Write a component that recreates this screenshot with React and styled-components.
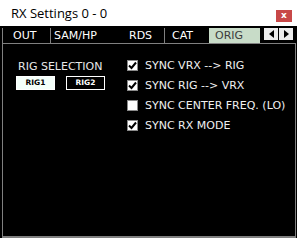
import React, { useState } from "react";
import styled, { createGlobalStyle } from "styled-components";

const Global = createGlobalStyle`
  html, body { margin: 0; padding: 0; background: #000; }
  body { width: 297px; height: 238px; overflow: hidden; }
`;

const Window = styled.div`
  width: 297px;
  height: 238px;
  display: flex;
  flex-direction: column;
  background: #000;
`;

const TitleBar = styled.div`
  height: 26px;
  background: #fff;
  display: flex;
  align-items: center;
  padding-left: 11px;
  padding-right: 5px;
  box-sizing: border-box;
`;

const Title = styled.span`
  font-family: "Open Sans", "Noto Sans", sans-serif;
  font-size: 13px;
  color: #000;
  line-height: 1;
`;

const CloseBtn = styled.div`
  margin-left: auto;
  width: 16px;
  height: 12px;
  margin-top: 6px;
  background: #c84848;
  color: #fff;
  font-family: "DejaVu Sans", sans-serif;
  font-size: 9px;
  font-weight: bold;
  line-height: 11px;
  text-align: center;
`;

const Body = styled.div`
  flex: 1;
  display: flex;
  flex-direction: column;
  padding: 0 1px 0 2px;
`;

const TabRow = styled.div`
  height: 17px;
  display: flex;
  align-items: flex-end;
`;

const Tab = styled.div`
  box-sizing: border-box;
  height: 15px;
  width: ${(p) => p.$w}px;
  padding-left: ${(p) => p.$pl}px;
  border-left: 1px solid ${(p) => (p.$sep ? "#808080" : "transparent")};
  background: ${(p) => (p.$active ? "#c8dcc8" : "#000")};
  color: ${(p) => (p.$active ? "#3c3c3c" : "#fff")};
  font-family: "DejaVu Sans", sans-serif;
  font-size: 11px;
  line-height: 15px;
  white-space: nowrap;
`;

const Arrows = styled.div`
  display: flex;
  gap: 1px;
  margin-left: 4px;
  align-self: flex-start;
  margin-top: 2px;
`;

const ArrowBtn = styled.div`
  width: 14px;
  height: 12px;
  background: #ececec;
  display: flex;
  align-items: center;
  justify-content: center;
`;

const Panel = styled.div`
  flex: 1;
  border: 1px solid #808080;
  border-bottom-width: 2px;
  display: flex;
  padding: 16px 0 0 13px;
`;

const LeftCol = styled.div`
  width: 111px;
  display: flex;
  flex-direction: column;
`;

const Label = styled.div`
  font-family: "DejaVu Sans", sans-serif;
  font-size: 11px;
  line-height: 13px;
  color: #e8e8e8;
  padding-left: 2px;
  white-space: nowrap;
`;

const RigRow = styled.div`
  display: flex;
  gap: 11px;
  margin-top: 3px;
`;

const RigBtn = styled.div`
  box-sizing: border-box;
  width: 39px;
  height: 14px;
  border: 1px solid #fff;
  background: ${(p) => (p.$on ? "#f4fffa" : "#000")};
  color: ${(p) => (p.$on ? "#000" : "#fff")};
  font-family: "DejaVu Sans", sans-serif;
  font-weight: bold;
  font-size: 7.5px;
  line-height: 12px;
  text-align: center;
`;

const RightCol = styled.div`
  display: flex;
  flex-direction: column;
  gap: 9px;
`;

const CheckRow = styled.div`
  display: flex;
  align-items: center;
  gap: 7px;
  height: 11px;
`;

const Box = styled.div`
  box-sizing: border-box;
  width: 11px;
  height: 11px;
  background: #fff;
  border: 1px solid #8a8a8a;
  display: flex;
  align-items: center;
  justify-content: center;
`;

const CheckText = styled.span`
  font-family: "DejaVu Sans", sans-serif;
  font-size: 11px;
  color: #f0f0f0;
  white-space: nowrap;
  line-height: 11px;
`;

const tabs = [
  { t: "OUT", w: 48, pl: 10, sep: true },
  { t: "SAM/HP", w: 57, pl: 3, sep: true },
  { t: "RDS", w: 57, pl: 21, sep: false },
  { t: "CAT", w: 45, pl: 7, sep: true },
  { t: "ORIG", w: 51, pl: 5, sep: false, active: true },
];

const checks = [
  { t: "SYNC VRX --> RIG", on: true },
  { t: "SYNC RIG --> VRX", on: true },
  { t: "SYNC CENTER FREQ. (LO)", on: false },
  { t: "SYNC RX MODE", on: true },
];

const Check = () => (
  <svg width="9" height="9" viewBox="0 0 9 9">
    <path d="M1 4.5 L3.5 7 L8 1.5" fill="none" stroke="#000" strokeWidth="2" />
  </svg>
);

export default function App() {
  const [rig, setRig] = useState(1);
  return (
    <Window>
      <Global />
      <TitleBar>
        <Title>RX Settings 0 - 0</Title>
        <CloseBtn>x</CloseBtn>
      </TitleBar>
      <Body>
        <TabRow>
          {tabs.map((tb) => (
            <Tab key={tb.t} $w={tb.w} $pl={tb.pl} $sep={tb.sep} $active={tb.active}>
              {tb.t}
            </Tab>
          ))}
          <Arrows>
            <ArrowBtn>
              <svg width="5" height="8" viewBox="0 0 5 8"><path d="M5 0 L0 4 L5 8 Z" fill="#000" /></svg>
            </ArrowBtn>
            <ArrowBtn>
              <svg width="5" height="8" viewBox="0 0 5 8"><path d="M0 0 L5 4 L0 8 Z" fill="#000" /></svg>
            </ArrowBtn>
          </Arrows>
        </TabRow>
        <Panel>
          <LeftCol>
            <Label>RIG SELECTION</Label>
            <RigRow>
              <RigBtn $on={rig === 1} onClick={() => setRig(1)}>RIG1</RigBtn>
              <RigBtn $on={rig === 2} onClick={() => setRig(2)}>RIG2</RigBtn>
            </RigRow>
          </LeftCol>
          <RightCol>
            {checks.map((c) => (
              <CheckRow key={c.t}>
                <Box>{c.on && <Check />}</Box>
                <CheckText>{c.t}</CheckText>
              </CheckRow>
            ))}
          </RightCol>
        </Panel>
      </Body>
    </Window>
  );
}
